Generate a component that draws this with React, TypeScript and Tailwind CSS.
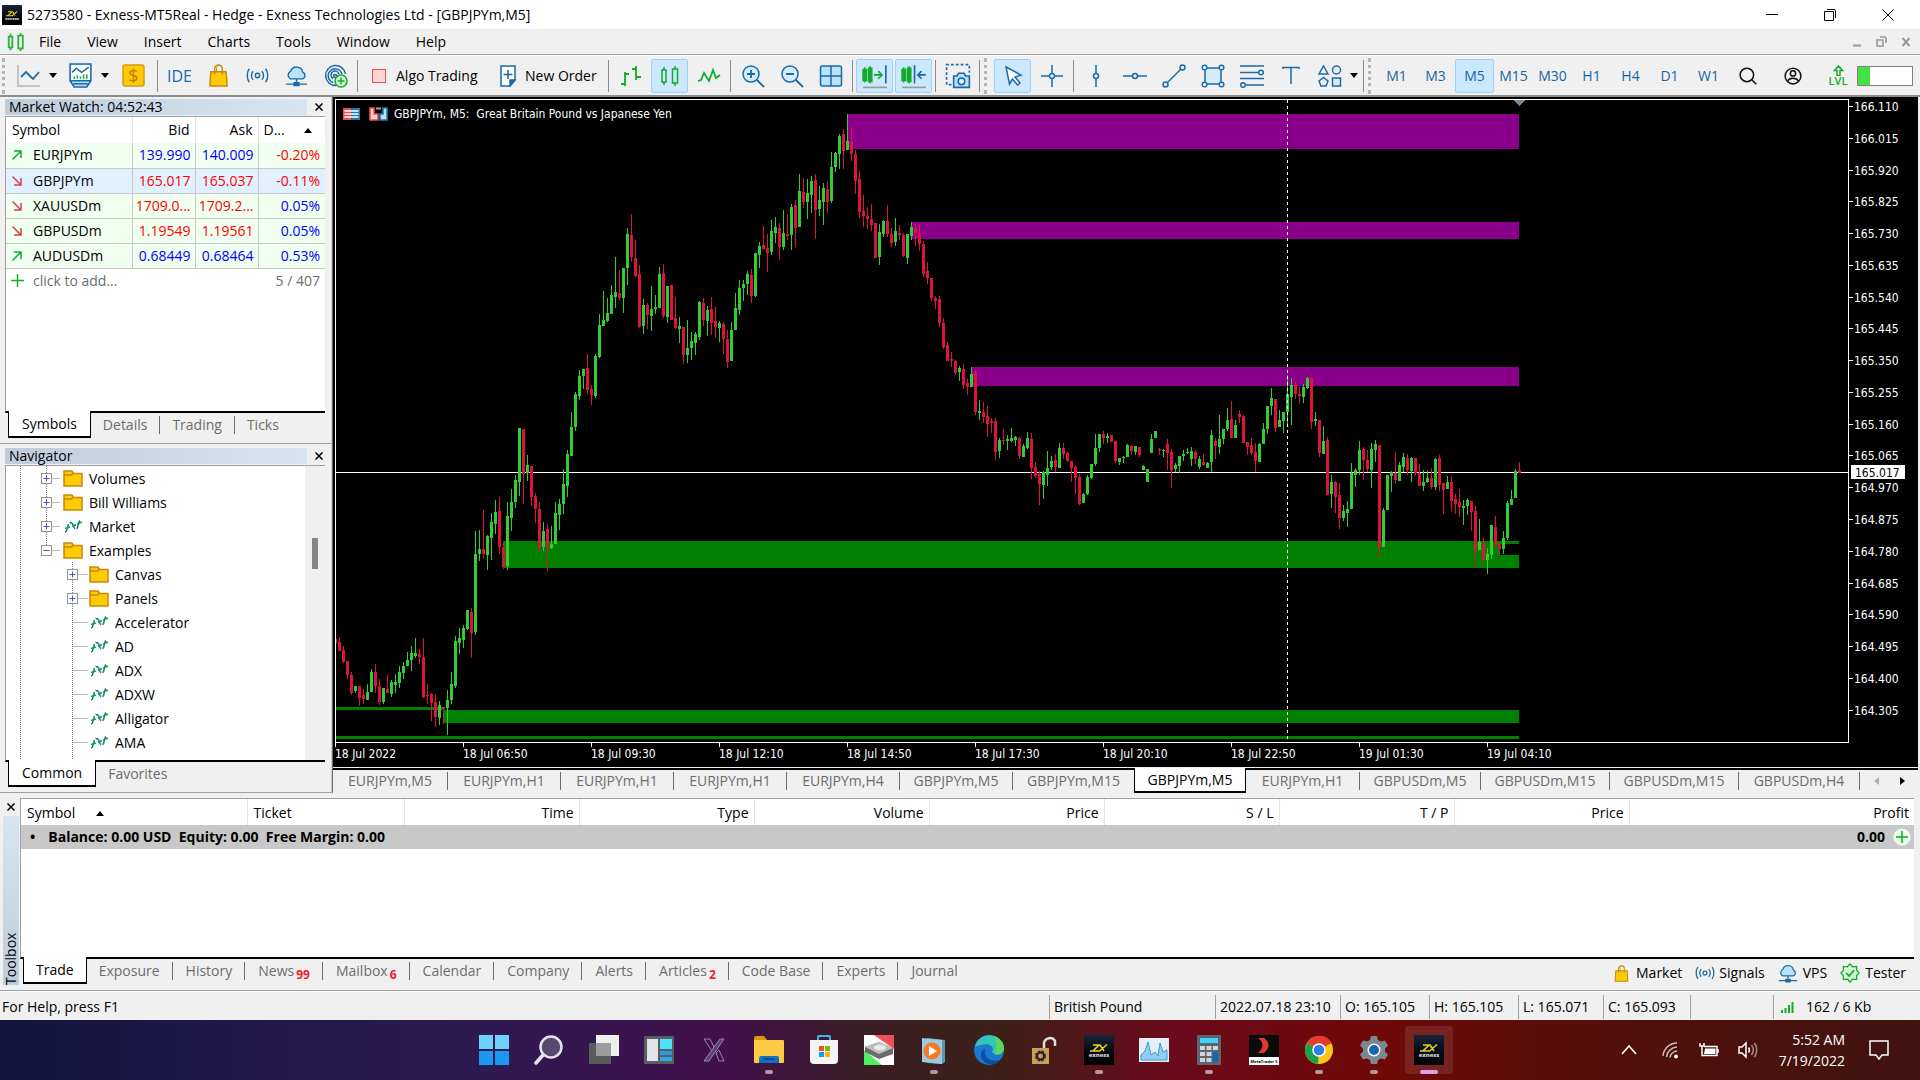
import type { ReactNode } from "react";

type Candle = [string, number, number, number, number];

// side (g = up, r = down), high, body top, body bottom, low.
// Values are scale units below the top edge of the plot.
const candles: Candle[] = [
  ["r", 1240, 1243, 1253, 1253], ["r", 1238, 1250, 1271, 1271], ["r", 1259, 1268, 1295, 1297], ["r", 1294, 1294, 1326, 1334],
  ["r", 1319, 1326, 1367, 1371], ["g", 1351, 1351, 1363, 1367], ["r", 1351, 1351, 1378, 1397], ["r", 1358, 1372, 1382, 1393],
  ["g", 1347, 1365, 1384, 1384], ["g", 1312, 1319, 1365, 1365], ["r", 1301, 1319, 1351, 1367], ["r", 1335, 1351, 1388, 1395],
  ["g", 1356, 1356, 1388, 1393], ["r", 1326, 1357, 1367, 1367], ["g", 1337, 1342, 1370, 1376], ["g", 1324, 1343, 1349, 1367],
  ["g", 1305, 1319, 1344, 1355], ["g", 1296, 1304, 1321, 1335], ["g", 1273, 1291, 1305, 1305], ["g", 1259, 1275, 1291, 1317],
  ["g", 1241, 1275, 1281, 1286], ["r", 1266, 1277, 1284, 1301], ["r", 1241, 1284, 1377, 1379], ["r", 1347, 1371, 1374, 1393],
  ["r", 1367, 1370, 1390, 1432], ["r", 1370, 1389, 1423, 1446], ["g", 1386, 1395, 1425, 1441], ["r", 1400, 1400, 1404, 1439],
  ["g", 1360, 1384, 1402, 1464], ["g", 1319, 1347, 1384, 1393], ["g", 1236, 1247, 1351, 1356], ["g", 1218, 1241, 1252, 1277],
  ["g", 1211, 1218, 1245, 1263], ["g", 1176, 1176, 1220, 1223], ["r", 1171, 1181, 1229, 1286], ["g", 994, 1047, 1227, 1234],
  ["g", 992, 1035, 1046, 1063], ["r", 945, 1035, 1047, 1056], ["g", 1003, 1006, 1049, 1084], ["g", 952, 973, 1010, 1061],
  ["g", 922, 950, 978, 1001], ["r", 915, 948, 1031, 1046], ["r", 1018, 1030, 1077, 1081], ["g", 927, 959, 1075, 1084],
  ["g", 897, 927, 964, 994], ["g", 865, 876, 927, 941], ["g", 756, 756, 881, 913], ["r", 759, 759, 862, 932],
  ["g", 819, 842, 860, 879], ["r", 844, 844, 915, 936], ["r", 906, 913, 943, 975], ["r", 927, 943, 1033, 1045],
  ["g", 973, 994, 1031, 1040], ["r", 978, 989, 1031, 1086], ["g", 982, 1024, 1033, 1035], ["g", 927, 952, 1024, 1024],
  ["g", 920, 932, 957, 992], ["g", 851, 885, 932, 955], ["g", 807, 816, 890, 915], ["g", 719, 754, 821, 821],
  ["g", 674, 678, 754, 763], ["g", 623, 636, 683, 692], ["g", 620, 620, 636, 666], ["r", 586, 618, 669, 681],
  ["r", 657, 666, 680, 703], ["g", 586, 590, 683, 687], ["g", 493, 519, 593, 595], ["g", 440, 507, 521, 521],
  ["g", 457, 491, 510, 512], ["g", 427, 450, 493, 493], ["g", 362, 443, 454, 479], ["r", 393, 445, 457, 463],
  ["g", 387, 387, 457, 491], ["g", 295, 309, 387, 427], ["r", 263, 311, 362, 374], ["r", 323, 364, 406, 408],
  ["r", 380, 401, 523, 526], ["g", 459, 473, 521, 540], ["r", 468, 473, 496, 528], ["g", 429, 482, 498, 533],
  ["g", 450, 477, 482, 493], ["g", 385, 401, 480, 480], ["r", 378, 399, 498, 503], ["g", 429, 429, 500, 514],
  ["r", 427, 427, 507, 507], ["r", 454, 503, 526, 528], ["g", 500, 521, 528, 560], ["r", 523, 523, 588, 609],
  ["g", 507, 572, 588, 606], ["g", 535, 556, 572, 600], ["g", 535, 540, 560, 588], ["g", 463, 466, 546, 553],
  ["r", 457, 468, 507, 521], ["g", 475, 484, 510, 544], ["r", 454, 482, 514, 542], ["r", 477, 510, 523, 549],
  ["g", 510, 514, 526, 558], ["r", 512, 517, 551, 586], ["r", 530, 551, 604, 618], ["g", 512, 530, 602, 602],
  ["g", 445, 480, 530, 530], ["g", 415, 434, 484, 496], ["g", 415, 424, 434, 463], ["g", 395, 401, 424, 450],
  ["r", 390, 404, 452, 468], ["g", 353, 353, 452, 454], ["g", 327, 337, 357, 387], ["r", 291, 334, 344, 346],
  ["r", 309, 341, 353, 397], ["g", 277, 302, 350, 357], ["g", 270, 293, 307, 330], ["r", 284, 295, 339, 369],
  ["g", 254, 307, 339, 346], ["r", 263, 309, 314, 323], ["g", 240, 247, 311, 346], ["r", 231, 242, 295, 339],
  ["g", 171, 210, 293, 293], ["r", 181, 212, 235, 249], ["g", 183, 214, 235, 274], ["g", 176, 187, 219, 261],
  ["r", 171, 184, 254, 321], ["g", 198, 231, 251, 267], ["g", 192, 203, 235, 288], ["r", 187, 205, 235, 261],
  ["g", 120, 154, 233, 238], ["g", 120, 123, 154, 167], ["g", 79, 83, 125, 160], ["r", 67, 79, 118, 160],
  ["g", 33, 95, 115, 115], ["r", 62, 97, 125, 141], ["r", 115, 125, 187, 217], ["r", 164, 182, 258, 272],
  ["r", 219, 256, 267, 293], ["r", 247, 267, 274, 297], ["r", 240, 274, 288, 302], ["r", 284, 284, 364, 364],
  ["g", 286, 304, 362, 380], ["g", 277, 279, 309, 316], ["r", 242, 279, 309, 316], ["r", 295, 309, 330, 339],
  ["g", 272, 302, 327, 337], ["r", 288, 307, 311, 323], ["r", 307, 311, 360, 362], ["g", 309, 309, 364, 378],
  ["g", 281, 293, 314, 323], ["r", 286, 295, 307, 337], ["r", 288, 307, 332, 348], ["r", 325, 332, 401, 408],
  ["r", 374, 394, 410, 424], ["r", 410, 410, 457, 463], ["r", 452, 457, 463, 482], ["r", 452, 459, 514, 523],
  ["r", 503, 514, 570, 574], ["r", 558, 565, 602, 602], ["r", 581, 597, 602, 616], ["r", 600, 602, 630, 634],
  ["g", 613, 618, 627, 648], ["r", 609, 620, 657, 666], ["r", 643, 653, 662, 680], ["g", 616, 632, 662, 662],
  ["r", 625, 627, 719, 726], ["g", 692, 718, 721, 738], ["r", 696, 719, 730, 745], ["r", 706, 729, 747, 777],
  ["r", 733, 741, 745, 768], ["r", 733, 740, 812, 830], ["g", 779, 784, 809, 826], ["r", 759, 783, 786, 796],
  ["g", 772, 782, 786, 807], ["g", 756, 779, 786, 789], ["g", 775, 777, 784, 798], ["r", 777, 779, 821, 828],
  ["g", 793, 798, 823, 823], ["g", 766, 779, 802, 805], ["r", 768, 782, 849, 874], ["r", 835, 846, 867, 872],
  ["r", 856, 862, 885, 934], ["g", 855, 858, 888, 920], ["g", 809, 849, 865, 890], ["g", 821, 832, 846, 853],
  ["r", 816, 830, 846, 858], ["g", 791, 802, 849, 849], ["r", 791, 802, 816, 828], ["r", 812, 815, 832, 835],
  ["r", 832, 832, 849, 881], ["r", 842, 846, 872, 909], ["r", 862, 869, 932, 934], ["g", 906, 909, 929, 929],
  ["g", 865, 869, 909, 911], ["g", 839, 839, 872, 874], ["g", 770, 802, 839, 844], ["g", 770, 770, 802, 812],
  ["r", 763, 770, 779, 793], ["g", 768, 775, 779, 791], ["r", 772, 772, 789, 789], ["r", 786, 786, 832, 837],
  ["g", 826, 826, 835, 842], ["g", 821, 823, 826, 837], ["g", 793, 796, 823, 823], ["r", 796, 798, 809, 819],
  ["g", 798, 798, 812, 819], ["r", 800, 800, 819, 823], ["g", 842, 844, 853, 853], ["g", 851, 851, 881, 881],
  ["g", 770, 782, 814, 814], ["g", 763, 763, 779, 779], ["r", 802, 805, 807, 819], ["g", 805, 806, 808, 823],
  ["r", 782, 793, 814, 853], ["r", 805, 812, 853, 895], ["g", 837, 842, 851, 858], ["g", 821, 821, 844, 860],
  ["g", 807, 816, 821, 833], ["g", 802, 811, 813, 816], ["g", 800, 809, 828, 844], ["r", 807, 812, 828, 839],
  ["g", 821, 828, 846, 851], ["r", 816, 835, 842, 844], ["g", 835, 837, 849, 849], ["g", 761, 772, 835, 858],
  ["r", 779, 786, 798, 828], ["g", 726, 782, 800, 816], ["g", 759, 759, 782, 793], ["g", 710, 738, 759, 763],
  ["r", 694, 736, 779, 779], ["g", 738, 749, 779, 779], ["r", 715, 724, 731, 745], ["r", 726, 729, 791, 791],
  ["r", 789, 789, 800, 819], ["r", 779, 796, 814, 819], ["r", 791, 812, 832, 858], ["g", 791, 793, 835, 835],
  ["g", 745, 759, 793, 793], ["g", 706, 706, 759, 770], ["g", 664, 687, 706, 726], ["r", 689, 689, 756, 766],
  ["g", 715, 738, 754, 754], ["g", 719, 719, 740, 768], ["g", 634, 678, 719, 754], ["g", 641, 657, 685, 749],
  ["r", 650, 657, 678, 689], ["r", 662, 678, 683, 701], ["g", 655, 662, 685, 699], ["g", 639, 641, 664, 666],
  ["r", 641, 641, 742, 759], ["g", 719, 736, 740, 752], ["r", 738, 738, 814, 823], ["g", 752, 786, 816, 816],
  ["r", 777, 784, 911, 911], ["g", 865, 881, 909, 941], ["r", 879, 881, 915, 952], ["r", 883, 911, 964, 989],
  ["g", 934, 948, 964, 971], ["g", 925, 943, 952, 985], ["g", 837, 860, 943, 943], ["g", 849, 853, 865, 892],
  ["g", 786, 807, 853, 865], ["r", 800, 805, 830, 876], ["r", 807, 830, 851, 858], ["g", 791, 805, 853, 895],
  ["g", 784, 793, 807, 835], ["r", 796, 796, 1033, 1056], ["g", 941, 945, 1031, 1031], ["g", 865, 865, 945, 945],
  ["g", 856, 858, 867, 904], ["r", 812, 860, 876, 886], ["g", 835, 842, 879, 879], ["g", 814, 823, 846, 858],
  ["r", 816, 826, 853, 865], ["g", 823, 826, 856, 881], ["r", 826, 826, 860, 867], ["r", 839, 860, 890, 890],
  ["g", 853, 881, 890, 902], ["g", 856, 872, 881, 883], ["r", 849, 872, 892, 897], ["g", 826, 828, 892, 899],
  ["r", 819, 826, 888, 902], ["r", 883, 883, 899, 955], ["g", 867, 881, 897, 897], ["r", 867, 881, 925, 948],
  ["r", 909, 920, 932, 955], ["r", 897, 927, 939, 962], ["g", 922, 936, 941, 980], ["g", 918, 922, 936, 957],
  ["r", 925, 925, 950, 994], ["r", 936, 948, 1040, 1077], ["g", 966, 1019, 1038, 1038], ["r", 1010, 1022, 1061, 1068],
  ["g", 1033, 1047, 1061, 1093], ["g", 980, 980, 1049, 1058], ["r", 959, 985, 1026, 1031], ["r", 1022, 1024, 1035, 1052],
  ["g", 994, 1010, 1035, 1047], ["g", 925, 929, 1010, 1015], ["g", 899, 920, 934, 934], ["g", 851, 856, 918, 918],
  ["r", 835, 853, 860, 860],
];

const UNIT = 0.4337;
const STEP = 4;
const PRICE_Y = 372;

// x, y, width, height, colour
const zones: [number, number, number, number, string][] = [
  [512, 14, 671, 35, "#8b008b"],
  [575, 122, 608, 17, "#8b008b"],
  [635, 267, 548, 19, "#8b008b"],
  [167, 441, 996, 27, "#008000"],
  [1163, 441, 20, 3, "#008000"],
  [1163, 455, 20, 13, "#008000"],
  [0, 607, 108, 3, "#008000"],
  [108, 610, 1075, 13, "#008000"],
  [0, 636, 1183, 3, "#008000"],
];

const prices = [
  "166.110", "166.015", "165.920", "165.825", "165.730", "165.635", "165.540", "165.445", "165.350", "165.255",
  "165.160", "165.065", "164.970", "164.875", "164.780", "164.685", "164.590", "164.495", "164.400", "164.305",
];

const times = [
  "18 Jul 2022", "18 Jul 06:50", "18 Jul 09:30", "18 Jul 12:10", "18 Jul 14:50",
  "18 Jul 17:30", "18 Jul 20:10", "18 Jul 22:50", "19 Jul 01:30", "19 Jul 04:10",
];

const quotes = [
  { up: true, symbol: "EURJPYm", bid: "139.990", ask: "140.009", change: "-0.20%", blue: true, neg: true },
  { up: false, symbol: "GBPJPYm", bid: "165.017", ask: "165.037", change: "-0.11%", blue: false, neg: true, selected: true },
  { up: false, symbol: "XAUUSDm", bid: "1709.0...", ask: "1709.2...", change: "0.05%", blue: false, neg: false },
  { up: false, symbol: "GBPUSDm", bid: "1.19549", ask: "1.19561", change: "0.05%", blue: false, neg: false },
  { up: true, symbol: "AUDUSDm", bid: "0.68449", ask: "0.68464", change: "0.53%", blue: true, neg: false },
];

const tree = [
  { label: "Volumes", depth: 1, box: "+", folder: true },
  { label: "Bill Williams", depth: 1, box: "+", folder: true },
  { label: "Market", depth: 1, box: "+", folder: false },
  { label: "Examples", depth: 1, box: "-", folder: true },
  { label: "Canvas", depth: 2, box: "+", folder: true },
  { label: "Panels", depth: 2, box: "+", folder: true },
  { label: "Accelerator", depth: 2, box: "", folder: false },
  { label: "AD", depth: 2, box: "", folder: false },
  { label: "ADX", depth: 2, box: "", folder: false },
  { label: "ADXW", depth: 2, box: "", folder: false },
  { label: "Alligator", depth: 2, box: "", folder: false },
  { label: "AMA", depth: 2, box: "", folder: false },
  { label: "", depth: 2, box: "", folder: false },
];

const chartTabs = [
  { label: "EURJPYm,M5", w: "w-[115px]" },
  { label: "EURJPYm,H1", w: "w-[113px]" },
  { label: "EURJPYm,H1", w: "w-[113px]" },
  { label: "EURJPYm,H1", w: "w-[113px]" },
  { label: "EURJPYm,H4", w: "w-[113px]" },
  { label: "GBPJPYm,M5", w: "w-[113px]" },
  { label: "GBPJPYm,M15", w: "w-[121px]", last: true },
  { label: "GBPJPYm,M5", w: "w-[112px]", active: true },
  { label: "EURJPYm,H1", w: "w-[114px]" },
  { label: "GBPUSDm,M5", w: "w-[121px]" },
  { label: "GBPUSDm,M15", w: "w-[129px]" },
  { label: "GBPUSDm,M15", w: "w-[129px]" },
  { label: "GBPUSDm,H4", w: "w-[121px]" },
];

const toolboxTabs = [
  { label: "Exposure" }, { label: "History" }, { label: "News", count: 99 }, { label: "Mailbox", count: 6 },
  { label: "Calendar" }, { label: "Company" }, { label: "Alerts" }, { label: "Articles", count: 2 },
  { label: "Code Base" }, { label: "Experts" }, { label: "Journal" },
];

const BLUE = "#1a6aa8";
const GREEN = "#12ac2c";

function Ico({ size = 24, h, box = "0 0 24 24", children }: { size?: number; h?: number; box?: string; children: ReactNode }) {
  return (
    <svg width={size} height={h ?? size} viewBox={box} fill="none" strokeWidth="1.5" className="shrink-0">
      {children}
    </svg>
  );
}

function Sep() {
  return <span className="mx-[2px] h-8 w-px shrink-0 bg-[#8a8a8a]" />;
}

function Grip() {
  return <span className="ml-[2px] mr-[6px] h-9 shrink-0 border-l-3 border-dotted border-[#b4b4b4]" />;
}

function Caret() {
  return <Ico size={8} h={5} box="0 0 8 5"><path d="M0 0h8L4 5z" fill="#000" /></Ico>;
}

function Tool({ label, active, children }: { label: string; active?: boolean; children: ReactNode }) {
  return (
    <button aria-label={label} className="flex h-[36px] w-[39px] shrink-0 items-center justify-center">
      <span className={active ? "flex h-[34px] w-[37px] items-center justify-center rounded-xs border border-[#99d1ff] bg-[#cce8ff]" : "flex"}>
        {children}
      </span>
    </button>
  );
}

function Bag({ size = 24 }: { size?: number }) {
  return (
    <Ico size={size}>
      <path d="M4 8h16l1 15H3z" fill="#fccb05" stroke="#c8890a" />
      <path d="M8 11V5a4 4 0 0 1 8 0v6" stroke="#c8890a" />
      <path d="M10 8V3.500a2 2 0 0 1 3-1.500" stroke="#c8890a" strokeWidth="1" />
    </Ico>
  );
}

function Signal({ size = 24 }: { size?: number }) {
  return (
    <Ico size={size}>
      <g stroke={BLUE}>
        <circle cx="12" cy="12" r="2.300" />
        <path d="M7.500 7.500a6.500 6.500 0 0 0 0 9M16.500 7.500a6.500 6.500 0 0 1 0 9M3.500 5a10 10 0 0 0-2 7 10 10 0 0 0 2 7M20.500 5a10 10 0 0 1 2 7 10 10 0 0 1-2 7" />
      </g>
    </Ico>
  );
}

function Cloud({ size = 24 }: { size?: number }) {
  return (
    <Ico size={size}>
      <path d="M5.500 15.500a4.500 4.500 0 0 1 .5-8 6.500 6.500 0 0 1 12.500 1 3.800 3.800 0 0 1 0 7z" fill="#b9e2fb" stroke={BLUE} />
      <path d="M12 15.500V20M1 21h22M9.500 19.500h5v3h-5z" stroke={BLUE} />
    </Ico>
  );
}

function CandlePair({ color }: { color: string }) {
  return (
    <g stroke={color}>
      <path d="M6 3v3M6 18v3M4 6h4v12H4zM17 2v3M17 19v3M14.500 5h5v14h-5z" />
    </g>
  );
}

function Exness({ size = 30 }: { size?: number }) {
  return (
    <svg width={size} height={size} viewBox="0 0 30 30" className="shrink-0">
      <defs>
        <linearGradient id="exBg" x1="0" y1="0" x2="0" y2="1">
          <stop offset="0" stopColor="#17253a" />
          <stop offset="0.600" stopColor="#05080d" />
          <stop offset="1" stopColor="#000" />
        </linearGradient>
      </defs>
      <rect width="30" height="30" fill="url(#exBg)" />
      <path d="M9 10h6l-6 6h6M16 10l4 6M23 9.500l-8 7M6 16h5" stroke="#e6d21f" strokeWidth="1.600" fill="none" />
      <text x="15" y="22" textAnchor="middle" fontSize="6" fontWeight="700" fill="#e8e8e8" fontFamily="Open Sans">exness</text>
    </svg>
  );
}

function TitleBar() {
  return (
    <header className="flex h-[29px] shrink-0 items-center bg-white">
      <div className="flex flex-1 items-center gap-[5px] pl-[2px]">
        <Exness size={20} />
        <h1>5273580 - Exness-MT5Real - Hedge - Exness Technologies Ltd - [GBPJPYm,M5]</h1>
      </div>
      <button aria-label="Minimize" className="flex w-[58px] justify-center">
        <Ico size={12} box="0 0 12 12"><path d="M0 5.500h12" stroke="#000" strokeWidth="1" /></Ico>
      </button>
      <button aria-label="Restore" className="flex w-[58px] justify-center">
        <Ico size={12} box="0 0 12 12">
          <path d="M.5 2.500h9v9h-9zM3 .5h7a1.500 1.500 0 0 1 1.500 1.500v7" stroke="#000" strokeWidth="1" />
        </Ico>
      </button>
      <button aria-label="Close" className="mr-[3px] flex w-[58px] justify-center">
        <Ico size={12} box="0 0 12 12"><path d="M.5.5l11 11M11.500.5l-11 11" stroke="#000" strokeWidth="1" /></Ico>
      </button>
    </header>
  );
}

function MenuBar() {
  return (
    <nav className="flex h-[26px] shrink-0 items-center border-b border-[#a0a0a0] pl-[6px]">
      <Ico size={20} box="2 1 20 22"><g strokeWidth="2"><CandlePair color="#2cb53c" /></g></Ico>
      <div className="flex flex-1">
        {["File", "View", "Insert", "Charts", "Tools", "Window", "Help"].map((m) => (
          <button key={m} className="px-[13px]">{m}</button>
        ))}
      </div>
      <div className="flex items-center gap-[14px] pr-[9px]">
        <button aria-label="Minimize chart"><Ico size={10} box="0 0 10 10"><path d="M1 8.500h8" stroke="#999" strokeWidth="2" /></Ico></button>
        <button aria-label="Restore chart">
          <Ico size={11} box="0 0 11 11"><path d="M1 4h6v6H1zM4 1h4.500A1.500 1.500 0 0 1 10 2.500V7" stroke="#999" strokeWidth="1.600" /></Ico>
        </button>
        <button aria-label="Close chart"><Ico size={10} box="0 0 10 10"><path d="M1.500 1l7 8M8.500 1l-7 8" stroke="#999" strokeWidth="2" /></Ico></button>
      </div>
    </nav>
  );
}

function Toolbar() {
  return (
    <div className="flex h-[42px] shrink-0 items-center border-b-2 border-[#8c8c8c] border-t border-t-white">
      <Grip />
      <button aria-label="Line chart" className="flex w-[49px] shrink-0 items-center justify-between pl-[6px] pr-[3px]">
        <Ico><path d="M1 1v21h22" stroke="#b4b4b4" /><path d="M4 13l5-5 7 7 6-7" stroke={BLUE} strokeWidth="1.800" /></Ico>
        <Caret />
      </button>
      <button aria-label="Indicators" className="flex w-[52px] shrink-0 items-center justify-between pl-[8px] pr-[3px]">
        <Ico size={25}>
          <path d="M2 1h20v16l-4 6H6l-4-6zM2 17h20" stroke={BLUE} fill="#b9e2fb" />
          <path d="M3 2h18v14H3z" fill="#fff" />
          <path d="M4 9l4-4 5 4 7-5" stroke={BLUE} />
          <path d="M6 15v-2M9 15v-3M12 15v-2M15 15v-4M18 15v-4" stroke={GREEN} />
          <path d="M5 20h14" stroke={BLUE} />
        </Ico>
        <Caret />
      </button>
      <button aria-label="Deposit" className="flex w-[43px] shrink-0 justify-center">
        <svg width="23" height="23" viewBox="0 0 23 23">
          <rect x="1" y="1" width="21" height="21" rx="2" fill="#fccb05" stroke="#d39a18" strokeWidth="1.500" />
          <text x="11.500" y="18" textAnchor="middle" fontSize="18" fill="#c07a00" fontFamily="Open Sans">$</text>
        </svg>
      </button>
      <Sep />
      <button className="w-[39px] shrink-0 text-base text-[#1a6aa8]">IDE</button>
      <Tool label="Market"><Bag size={23} /></Tool>
      <Tool label="Signals"><Signal size={23} /></Tool>
      <Tool label="VPS"><Cloud size={23} /></Tool>
      <Tool label="Copy signal">
        <Ico>
          <g stroke={BLUE}>
            <path d="M12 21.500A10 10 0 1 1 21.500 10M9 18.500A7 7 0 1 1 18 10M9 14.500a4 4 0 1 1 6-4" />
            <circle cx="11" cy="12" r="1.500" />
          </g>
          <circle cx="17" cy="17" r="6" fill="#d7f5d7" stroke={GREEN} />
          <path d="M17 13.500v7M13.500 17h7" stroke={GREEN} />
        </Ico>
      </Tool>
      <Sep />
      <button className="flex w-[131px] shrink-0 items-center gap-[10px] pl-[12px]">
        <span className="size-[14px] border border-[#d9534f] bg-[#ffd5cf]" />Algo Trading
      </button>
      <button className="flex w-[115px] shrink-0 items-center gap-[8px] pl-[8px]">
        <Ico size={18} h={22} box="0 0 18 22">
          <path d="M2 1h14v14l-5 6H2z" fill="#fff" stroke={BLUE} /><path d="M16 15h-5v6z" fill={BLUE} stroke={BLUE} />
          <path d="M9 5v9M4.500 9.500h9" stroke={BLUE} />
        </Ico>
        New Order
      </button>
      <Sep />
      <Tool label="Bar chart"><Ico><path d="M6 8v14M6 10h4M2 20h4M17 2v14M13 5h4M17 13h5" stroke={GREEN} strokeWidth="1.800" /></Ico></Tool>
      <Tool label="Candlesticks" active><Ico><CandlePair color={GREEN} /></Ico></Tool>
      <Tool label="Line"><Ico><path d="M1 17l3-1 3-7 5 8 4-11 3 8 4-3" stroke={GREEN} strokeWidth="1.800" /></Ico></Tool>
      <Sep />
      <Tool label="Zoom in">
        <Ico><circle cx="10" cy="10" r="8" fill="#d5ecfb" stroke={BLUE} /><path d="M16 16l7 7M10 6v8M6 10h8" stroke={BLUE} strokeWidth="1.800" /></Ico>
      </Tool>
      <Tool label="Zoom out">
        <Ico><circle cx="10" cy="10" r="8" fill="#d5ecfb" stroke={BLUE} /><path d="M16 16l7 7M6 10h8" stroke={BLUE} strokeWidth="1.800" /></Ico>
      </Tool>
      <Tool label="Tile windows">
        <Ico><rect x="1.500" y="2" width="21" height="20" rx="2" fill="#b9e2fb" stroke={BLUE} /><path d="M12 2v20M1.500 12h21" stroke={BLUE} /></Ico>
      </Tool>
      <Sep />
      <Tool label="Chart shift" active>
        <Ico size={26}>
          <path d="M2.500 4v14M1 6h3v10H1zM7.500 3v16M6 5h3v12H6zM11 11h7M15 7.500l3.500 3.500L15 14.500" stroke={GREEN} />
          <path d="M22 2v17" stroke={BLUE} /><path d="M1 22.500h22" stroke="#9a9a9a" />
        </Ico>
      </Tool>
      <Tool label="Auto scroll" active>
        <Ico size={26}>
          <path d="M2.500 4v14M1 6h3v10H1zM7.500 3v16M6 5h3v12H6z" stroke={GREEN} />
          <path d="M12.500 2v17M16 11h7M19 7.500L15.500 11l3.500 3.500" stroke={BLUE} /><path d="M1 22.500h22" stroke="#9a9a9a" />
        </Ico>
      </Tool>
      <Sep />
      <Tool label="Screenshot">
        <Ico size={26}>
          <path d="M6 20H1.500V1.500h21V9" stroke={BLUE} strokeDasharray="2.500 2" />
          <path d="M8 12h3l1.500-2.500h5L19 12h3.500v10.500H8z" fill="#b9e2fb" stroke={BLUE} />
          <circle cx="15.200" cy="17" r="3" fill="#fff" stroke={BLUE} />
        </Ico>
      </Tool>
      <Sep />
      <Grip />
      <Tool label="Cursor" active><Ico><path d="M5 3l15 8-6 2 5 6-2.500 2-5-6-3 5z" fill="#fff" stroke={BLUE} /></Ico></Tool>
      <Tool label="Crosshair">
        <Ico><circle cx="12" cy="12" r="2.500" stroke={BLUE} /><path d="M12 1v8.500M12 14.500V23M1 12h8.500M14.500 12H23" stroke={BLUE} /></Ico>
      </Tool>
      <Sep />
      <Tool label="Vertical line"><Ico><circle cx="12" cy="12" r="2.500" stroke={BLUE} /><path d="M12 1v8.500M12 14.500V23" stroke={BLUE} /></Ico></Tool>
      <Tool label="Horizontal line"><Ico><circle cx="12" cy="12" r="2.500" stroke={BLUE} /><path d="M0 12h9.500M14.500 12H24" stroke={BLUE} /></Ico></Tool>
      <Tool label="Trend line">
        <Ico><circle cx="3.500" cy="20.500" r="2.500" stroke={BLUE} /><circle cx="20.500" cy="3.500" r="2.500" stroke={BLUE} /><path d="M5.500 18.500l13-13" stroke={BLUE} /></Ico>
      </Tool>
      <Tool label="Rectangle">
        <Ico>
          <g stroke={BLUE}>
            <path d="M4 4h16v16H4z" fill="#d5ecfb" />
            <circle cx="3.500" cy="3.500" r="2.300" fill="#fff" /><circle cx="20.500" cy="3.500" r="2.300" fill="#fff" />
            <circle cx="3.500" cy="20.500" r="2.300" fill="#fff" /><circle cx="20.500" cy="20.500" r="2.300" fill="#fff" />
          </g>
        </Ico>
      </Tool>
      <Tool label="Fibonacci">
        <Ico><path d="M0 2h24M0 8.500h18M0 14.500h24M6 21h18" stroke={BLUE} /><circle cx="21" cy="8.500" r="2.300" stroke={BLUE} /><circle cx="3" cy="21" r="2.300" stroke={BLUE} /></Ico>
      </Tool>
      <Tool label="Text"><Ico><path d="M4 5V3.500h16V5M12 3.500V20" stroke={BLUE} /></Ico></Tool>
      <button aria-label="Shapes" className="flex w-[51px] shrink-0 items-center gap-[8px] pl-[8px]">
        <Ico><g stroke={BLUE}><path d="M5.500 2l4.500 8H1z" /><circle cx="18.500" cy="6" r="4" /><path d="M5.500 13.500L10 17l-2 5H3l-2-5z" /><path d="M14.500 14h8v8h-8z" fill="#d5ecfb" /></g></Ico>
        <Caret />
      </button>
      <Sep />
      <Grip />
      {["M1", "M3", "M5", "M15", "M30", "H1", "H4", "D1", "W1"].map((t) => (
        <button
          key={t}
          className={`h-[34px] w-[39px] shrink-0 text-[#1565a5] ${t === "M5" ? "rounded-xs border border-[#99d1ff] bg-[#cce8ff]" : ""}`}
        >
          {t}
        </button>
      ))}
      <div className="ml-auto flex items-center pr-[7px]">
        <button aria-label="Search" className="flex w-[38px] justify-center">
          <Ico size={18}><circle cx="10.500" cy="10.500" r="9" stroke="#111" strokeWidth="2" /><path d="M17 17l6 6" stroke="#111" strokeWidth="2.200" /></Ico>
        </button>
        <button aria-label="Account" className="flex w-[52px] justify-center">
          <Ico size={18}><circle cx="12" cy="12" r="10.500" stroke="#111" strokeWidth="2" /><circle cx="12" cy="8.500" r="3.500" stroke="#111" strokeWidth="2" /><path d="M4.500 19c3-5.500 12-5.500 15 0" stroke="#111" strokeWidth="2" /></Ico>
        </button>
        <button className="flex w-[38px] flex-col items-center text-[11px] font-semibold leading-[10px] text-[#12ac2c]">
          <Ico size={11} box="0 0 11 11"><path d="M5.500 1l4 4.500h-2.500v5h-3v-5H1.500z" stroke={GREEN} /></Ico>
          LVL
        </button>
        <span className="flex h-[20px] w-[56px] border border-[#808080] bg-white"><span className="w-[12px] bg-[#44e044]" /></span>
      </div>
    </div>
  );
}

function PanelTitle({ children }: { children: ReactNode }) {
  return (
    <div className="-mr-[6px] flex h-[16px] items-center">
      <h2 className="h-[16px] flex-1 bg-linear-to-r from-[#bfcddb] to-[#d7e4f2] pl-[4px] leading-[16px]">{children}</h2>
      <button aria-label="Close panel" className="flex w-[24px] justify-center">
        <Ico size={8} box="0 0 8 8"><path d="M.5.5l7 7M7.500.5l-7 7" stroke="#000" /></Ico>
      </button>
    </div>
  );
}

function TabSep() {
  return <span className="h-[18px] w-px shrink-0 bg-[#6d6d6d]" />;
}

function PanelTabs({ tabs }: { tabs: string[] }) {
  const [active, ...rest] = tabs;
  return (
    <div className="flex h-[25px] items-start pl-[3px] text-[#6d6d6d]">
      <button className="-mt-[2px] h-[27px] border-x border-b-2 border-black bg-white px-[13px] text-black">{active}</button>
      {rest.map((t, i) => (
        <div key={t} className="flex h-[23px] items-center">
          {i > 0 && <TabSep />}
          <button className="px-[12px]">{t}</button>
        </div>
      ))}
    </div>
  );
}

function MarketWatch() {
  return (
    <section className="h-[347px] shrink-0 border-b border-[#a0a0a0] pl-[5px] pr-[6px] pt-[2px]">
      <PanelTitle>Market Watch: 04:52:43</PanelTitle>
      <div className="mt-px h-[297px] border-b-2 border-b-black border-l border-t border-l-[#a0a0a0] border-t-[#a0a0a0] bg-white">
        <table className="w-full table-fixed border-collapse">
          <colgroup>
            <col className="w-[126px]" /><col className="w-[63px]" /><col className="w-[63px]" /><col />
          </colgroup>
          <thead>
            <tr className="h-[26px]">
              <th className="border-r border-[#e3e3e3] pl-[6px] text-left font-normal">Symbol</th>
              <th className="border-r border-[#e3e3e3] pr-[5px] text-right font-normal">Bid</th>
              <th className="border-r border-[#e3e3e3] pr-[5px] text-right font-normal">Ask</th>
              <th className="pl-[5px] font-normal">
                <div className="flex items-center gap-[19px]">D...<Ico size={8} h={5} box="0 0 8 5"><path d="M0 5h8L4 0z" fill="#000" /></Ico></div>
              </th>
            </tr>
          </thead>
          <tbody>
            {quotes.map((q) => (
              <tr key={q.symbol} className={`h-[25px] border-b border-[#c8c8c8] ${q.selected ? "bg-[#e0f0ff]" : "bg-[#f0fff0]"}`}>
                <td className="border-r border-[#c8c8c8] pl-[6px]">
                  <div className="flex items-center gap-[11px]">
                    <Ico size={10} box="0 0 10 10">
                      {q.up ? <path d="M.5 9.500L9 1M2 1h7v7" stroke={GREEN} /> : <path d="M.5.5L9 9M2 9h7V2" stroke="#d8404a" />}
                    </Ico>
                    {q.symbol}
                  </div>
                </td>
                <td className={`border-r border-[#c8c8c8] pr-[4px] text-right ${q.blue ? "text-[#0000ff]" : "text-[#ff0000]"}`}>{q.bid}</td>
                <td className={`border-r border-[#c8c8c8] pr-[4px] text-right ${q.blue ? "text-[#0000ff]" : "text-[#ff0000]"}`}>{q.ask}</td>
                <td className={`pr-[5px] text-right ${q.neg ? "text-[#ff0000]" : "text-[#0000ff]"}`}>{q.change}</td>
              </tr>
            ))}
            <tr className="h-[25px] text-[#6d6d6d]">
              <td colSpan={2} className="pl-[5px]">
                <div className="flex items-center gap-[9px]">
                  <Ico size={13} box="0 0 13 13"><path d="M6.500 0v13M0 6.500h13" stroke={GREEN} /></Ico>click to add...
                </div>
              </td>
              <td colSpan={2} className="pr-[5px] text-right">5 / 407</td>
            </tr>
          </tbody>
        </table>
      </div>
      <PanelTabs tabs={["Symbols", "Details", "Trading", "Ticks"]} />
    </section>
  );
}

function Branch({ depth, box }: { depth: number; box: string }) {
  const x = depth === 1 ? 40.5 : 66.5;
  const dots = { stroke: "#808080", strokeWidth: 1, strokeDasharray: "1 1" };
  return (
    <svg width={depth === 1 ? 57 : 83} height="24" className="shrink-0">
      <path d="M14.500 0v24" {...dots} />
      {depth === 1 && <path d={box === "-" ? "M40.500 0v12" : "M40.500 0v24"} {...dots} />}
      {depth === 2 && <path d="M66.500 0v24" {...dots} />}
      <path d={`M${x} 12.500h${depth === 1 ? 14 : 15}`} {...dots} />
      {box && (
        <>
          <rect x={x - 5} y="7.500" width="10" height="10" fill="#fff" stroke="#919191" />
          <path d={box === "+" ? `M${x - 3} 12.500h6M${x} 9.500v6` : `M${x - 3} 12.500h6`} stroke="#3c5ca8" />
        </>
      )}
    </svg>
  );
}

function Navigator() {
  return (
    <section className="flex min-h-0 flex-1 flex-col border-b border-[#a0a0a0] pb-[5px] pl-[5px] pr-[6px] pt-[4px]">
      <PanelTitle>Navigator</PanelTitle>
      <div className="mt-px flex min-h-0 flex-1 border-b-2 border-b-black border-l border-t border-l-[#a0a0a0] border-t-[#a0a0a0] bg-white">
        <ul className="min-w-0 flex-1 overflow-hidden">
          {tree.map((n, i) => (
            <li key={i} className="flex h-6 items-center">
              <Branch depth={n.depth} box={n.box} />
              {n.folder ? (
                <Ico size={20} h={17} box="0 0 20 17">
                  <path d="M1 1h8l1.500 2.500H19V16H1z" fill="#fccb05" stroke="#c8890a" />
                  <path d="M1 5h7.500L10 3" stroke="#c8890a" />
                </Ico>
              ) : (
                <Ico size={20} h={17} box="0 0 20 17">
                  <path d="M2 14C5 14 4 4.500 7.500 4.500S10 11 13 11s1.500-8 5-9.500" stroke={BLUE} strokeDasharray="9 1.500" />
                  <path d="M2 10.500L7 9M9 8.500l4-2M14 6l5-2" stroke={GREEN} strokeWidth="1.800" />
                </Ico>
              )}
              <span className="pl-[6px] pt-px">{n.label}</span>
            </li>
          ))}
        </ul>
        <div className="w-[20px] bg-[#f0f0f0] pl-[7px] pt-[72px]"><div className="h-[31px] w-[6px] bg-[#858585]" /></div>
      </div>
      <PanelTabs tabs={["Common", "Favorites"]} />
    </section>
  );
}

function Plot() {
  return (
    <svg width="100%" height="100%" className="block" shapeRendering="crispEdges">
      {zones.map(([x, y, w, h, fill], i) => <rect key={i} x={x} y={y} width={w} height={h} fill={fill} />)}
      <rect x="0" y={PRICE_Y} width="100%" height="1" fill="#fff" />
      {candles.map(([side, ...levels], i) => {
        const [high, top, bottom, low] = levels.map((v) => Math.round(v * UNIT));
        const x = i * STEP - 1;
        const fill = side === "g" ? "#32cd32" : "#dc143c";
        return (
          <g key={i} fill={fill}>
            <rect x={x} y={high} width="1" height={Math.max(low - high, 1)} />
            <rect x={x - 1} y={top} width="3" height={Math.max(bottom - top, 1)} />
          </g>
        );
      })}
      <path d="M951.500 0v642" stroke="#fff" strokeDasharray="3 3" />
      <path d="M1178 0h11l-5.500 6z" fill="#778899" />
    </svg>
  );
}

function Chart() {
  return (
    <main className="flex min-h-0 flex-1 border-l border-[#6d6d6d] bg-black pl-[2px] pt-[2px] font-['DejaVu_Sans_Condensed','DejaVu_Sans',sans-serif] text-[12px] text-white">
      <div className="flex min-w-0 flex-1 flex-col">
        <div className="relative min-h-0 flex-1 border border-white">
          <Plot />
          <div className="absolute left-[6px] top-[6px] flex h-[16px] items-center">
            <Ico size={19} h={14} box="0 0 19 14">
              <path d="M1 1h8.500v12H1z" fill="#e8504a" /><path d="M9.500 1H18v12H9.500z" fill="#2478b8" />
              <path d="M2.500 4h14M2.500 7h14M2.500 10h14" stroke="#fff" />
            </Ico>
            <span className="w-[8px]" />
            <Ico size={19} h={14} box="0 0 19 14">
              <path d="M1 1h4v6h4v6H1z" fill="#ffd0ca" stroke="#e8504a" /><path d="M18 1h-4v6h-3v6h7z" fill="#b9e2fb" stroke="#2478b8" />
              <path d="M7 1.500h5" stroke="#aaa" strokeWidth="2" />
            </Ico>
            <span className="whitespace-pre pl-[6px]">GBPJPYm, M5:  Great Britain Pound vs Japanese Yen</span>
          </div>
        </div>
        <svg height="24" className="w-full shrink-0">
          {times.map((t, i) => (
            <g key={t} fill="#fff">
              <rect x={i * 128} y="0" width="1" height="4" />
              <text x={i * 128} y="15" fontSize="12">{t}</text>
            </g>
          ))}
        </svg>
      </div>
      <svg width="69" height="100%" className="shrink-0">
        {prices.map((p, i) => {
          const y = 7 + Math.round(i * 31.77);
          return (
            <g key={p} fill="#fff">
              <rect x="0" y={y} width="4" height="1" />
              <text x="5" y={y + 5} fontSize="12">{p}</text>
            </g>
          );
        })}
        <rect x="2" y="366" width="54" height="14" fill="#fff" />
        <text x="6" y="378" fontSize="12" fill="#000">165.017</text>
      </svg>
    </main>
  );
}

function ChartTabs() {
  return (
    <div className="flex h-[26px] shrink-0 border-l border-[#6d6d6d] pt-px text-[#6d6d6d]">
      <div className="flex min-w-0 flex-1 items-start border-t-2 border-black">
        {chartTabs.map((t, i) =>
          t.active ? (
            <button key={i} className={`-mt-[2px] h-[25px] shrink-0 border-x border-b-2 border-black bg-white text-black ${t.w}`}>{t.label}</button>
          ) : (
            <button key={i} className={`flex h-[22px] shrink-0 items-center ${t.w}`}>
              <span className="flex-1">{t.label}</span>
              {!t.last && <TabSep />}
            </button>
          )
        )}
        <div className="flex h-[22px] flex-1 items-center justify-end gap-[21px] pr-[13px]">
          <button aria-label="Previous tabs"><Ico size={5} h={8} box="0 0 5 8"><path d="M5 0v8L0 4z" fill="#b0b0b0" /></Ico></button>
          <button aria-label="Next tabs"><Ico size={5} h={8} box="0 0 5 8"><path d="M0 0v8l5-4z" fill="#000" /></Ico></button>
        </div>
      </div>
    </div>
  );
}

function Toolbox() {
  return (
    <section className="flex h-[198px] shrink-0 border-b border-[#a0a0a0] pr-[6px] pt-[5px]">
      <div className="flex w-[20px] shrink-0 flex-col items-center pl-[2px]">
        <button aria-label="Close toolbox" className="flex h-[18px] items-center">
          <Ico size={8} box="0 0 8 8"><path d="M.5.5l7 7M7.500.5l-7 7" stroke="#000" /></Ico>
        </button>
        <div className="mb-[5px] w-[16px] flex-1 rotate-180 bg-linear-to-b from-[#bfcddb] to-[#d7e4f2] leading-[16px] [writing-mode:vertical-rl]">Toolbox</div>
      </div>
      <div className="flex min-w-0 flex-1 flex-col">
        <div className="flex-1 border-b-2 border-b-black border-l border-t border-l-[#a0a0a0] border-t-[#a0a0a0] bg-white">
          <table className="w-full table-fixed border-collapse">
            <colgroup>
              <col className="w-[226px]" /><col className="w-[157px]" />
              <col className="w-[175px]" /><col className="w-[175px]" /><col className="w-[175px]" /><col className="w-[175px]" />
              <col className="w-[175px]" /><col className="w-[175px]" /><col className="w-[175px]" /><col />
            </colgroup>
            <thead>
              <tr className="h-[26px]">
                <th className="border-r border-[#e3e3e3] pl-[6px] pt-[2px] font-normal">
                  <div className="flex items-center gap-[21px]">Symbol<Ico size={8} h={5} box="0 0 8 5"><path d="M0 5h8L4 0z" fill="#000" /></Ico></div>
                </th>
                <th className="border-r border-[#e3e3e3] pl-[6px] pt-[2px] text-left font-normal">Ticket</th>
                {["Time", "Type", "Volume", "Price", "S / L", "T / P", "Price"].map((h, i) => (
                  <th key={i} className="border-r border-[#e3e3e3] pr-[5px] pt-[2px] text-right font-normal">{h}</th>
                ))}
                <th className="pr-[5px] pt-[2px] text-right font-normal">Profit</th>
              </tr>
            </thead>
            <tbody>
              <tr className="h-[24px] bg-[#c8c8c8] font-bold">
                <td colSpan={9} className="whitespace-pre pl-[9px]">•<span className="pl-[13px]">Balance: 0.00 USD  Equity: 0.00  Free Margin: 0.00</span></td>
                <td className="pr-[3px]">
                  <div className="flex items-center justify-end gap-[8px]">
                    0.00
                    <Ico size={18}><circle cx="12" cy="12" r="11.500" fill="#e9fbe9" /><path d="M12 4v16M4 12h16" stroke={GREEN} strokeWidth="2" /></Ico>
                  </div>
                </td>
              </tr>
            </tbody>
          </table>
        </div>
        <div className="flex h-[31px] pl-[3px] text-[#6d6d6d]">
          <button className="-mt-[2px] h-[27px] border-x border-b-2 border-black bg-white px-[12px] text-black">Trade</button>
          <div className="flex h-[24px] flex-1 items-center">
            {toolboxTabs.map((t, i) => (
              <div key={t.label} className="flex items-center gap-px">
                {i > 0 && <TabSep />}
                <button className="flex items-center gap-[2px] px-[12px]">
                  {t.label}
                  {t.count && <span className="relative top-[4px] text-[12px] font-bold text-[#ee1c25]">{t.count}</span>}
                </button>
              </div>
            ))}
          </div>
          <div className="flex h-[28px] items-center gap-[13px] pr-[8px] text-black">
            <button className="flex items-center gap-[6px]"><Bag size={17} />Market</button>
            <button className="flex items-center gap-[4px]"><Signal size={20} />Signals</button>
            <button className="flex items-center gap-[5px]"><Cloud size={20} />VPS</button>
            <button className="flex items-center gap-[5px]">
              <Ico size={20}>
                <path d="M12 1l3 3.500 5-.5v5l3 3-3 3v5l-5-.5L12 23l-3-3.500-5 .5v-5l-3-3 3-3V4l5 .5z" fill="#d7f5d7" stroke={GREEN} />
                <path d="M7.500 12l3.500 3.500 6-7" stroke={GREEN} strokeWidth="2" />
              </Ico>
              Tester
            </button>
          </div>
        </div>
      </div>
    </section>
  );
}

function StatusBar() {
  const cells = [
    { text: "British Pound", w: "w-[166px]" },
    { text: "2022.07.18 23:10", w: "w-[125px]" },
    { text: "O: 165.105", w: "w-[89px]" },
    { text: "H: 165.105", w: "w-[89px]" },
    { text: "L: 165.071", w: "w-[85px]" },
    { text: "C: 165.093", w: "w-[87px]" },
    { text: "", w: "w-[83px]" },
  ];
  return (
    <footer className="flex h-[29px] shrink-0 items-center border-t border-white pt-[2px]">
      <span className="flex-1 pl-[2px]">For Help, press F1</span>
      {cells.map((c, i) => (
        <span key={i} className={`h-[24px] border-l border-[#a0a0a0] pl-[4px] leading-[24px] ${c.w}`}>{c.text}</span>
      ))}
      <span className="flex h-[24px] w-[147px] items-center gap-[11px] border-l border-[#a0a0a0] pl-[7px]">
        <Ico size={14} h={12} box="0 0 14 12"><path d="M1 12V9M4.500 12V7M8 12V4M11.500 12V1" stroke={GREEN} strokeWidth="2" /></Ico>
        162 / 6 Kb
      </span>
    </footer>
  );
}

const apps: { label: string; open?: boolean; active?: boolean; icon: ReactNode }[] = [
  { label: "Start", icon: (
    <g><path d="M0 0h14v14H0zM16 0h14v14H16z" fill="#6fd0fa" /><path d="M0 16h14v14H0zM16 16h14v14H16z" fill="#1a98f2" /></g>
  ) },
  { label: "Search", icon: (
    <g fill="none" stroke="#e6e2ec"><circle cx="17" cy="12" r="10.500" strokeWidth="2.500" fill="#574a70" /><path d="M9 20l-7 8" strokeWidth="3.500" strokeLinecap="round" /></g>
  ) },
  { label: "Task view", icon: <g><rect x="0" y="8" width="22" height="21" fill="#5c5c5c" /><rect x="7" y="0" width="23" height="21" fill="#efefef" /><rect x="7" y="8" width="15" height="13" fill="#9c9c9c" /></g> },
  { label: "Widgets", icon: (
    <g><rect width="30" height="28" y="1" rx="1" fill="#58605f" /><rect x="3" y="4" width="11" height="22" fill="#e2e2ea" /><rect x="16" y="4" width="12" height="10" fill="#4ee2f8" /><rect x="16" y="16" width="12" height="4" fill="#2b9ee0" /><rect x="16" y="22" width="12" height="4" fill="#2ba8ea" /></g>
  ) },
  { label: "X", icon: (
    <g stroke="#9a86a8" fill="none"><path d="M5 4h6l4 8-2 4zM17 18l3-3 5 11h-5z" strokeWidth="1" /><path d="M21 4h4L10 26H5z" strokeWidth="1" fill="#5a4080" /></g>
  ) },
  { label: "File Explorer", open: true, icon: (
    <g><path d="M0 3q0-2 2-2h8l3 4h15v6H0z" fill="#d9960c" /><rect y="5" width="30" height="23" rx="1" fill="#fdcb43" /><path d="M5 28v-5q0-2 2-2h16q2 0 2 2v5z" fill="#1272c4" /><path d="M9 24h12" stroke="#0a4e91" strokeWidth="2" /></g>
  ) },
  { label: "Store", icon: (
    <g><path d="M9 7V2q0-1 1-1h10q1 0 1 1v5" stroke="#3ab4ee" strokeWidth="2" fill="none" /><path d="M1 5h28v20q0 4-4 4H5q-4 0-4-4z" fill="#f4f4f6" /><path d="M10 11h5v5h-5z" fill="#f25022" /><path d="M16 11h5v5h-5z" fill="#7fba00" /><path d="M10 17h5v5h-5z" fill="#00a4ef" /><path d="M16 17h5v5h-5z" fill="#ffb900" /></g>
  ) },
  { label: "Disk tool", icon: (
    <g><rect width="30" height="30" fill="#fff" /><path d="M10 0h20v14z" fill="#f0505a" /><path d="M0 15l18 15H0z" fill="#4cf05c" /><path d="M1 12l14-5 14 6v6l-14 5-14-7z" fill="#6b6b6b" /><path d="M1 12l14-5 14 6-14 6z" fill="#bdbdbd" /><ellipse cx="16" cy="12.500" rx="6" ry="3" fill="#e9e9e9" /></g>
  ) },
  { label: "Media player", open: true, icon: (
    <g><path d="M8 3l18 2v22l-3 2-15-1z" fill="#5f93ae" /><path d="M3 3l20 2v24l-20-2z" fill="#9dc9e0" /><circle cx="13" cy="16" r="8.500" fill="#f47b20" /><path d="M10 11l8 5-8 5z" fill="#fff" /></g>
  ) },
  { label: "Edge", icon: (
    <g><circle cx="15" cy="15" r="15" fill="#1a78d0" /><path d="M1 12C4-3 26-4 30 12c0 8-10 8-12 5 4-6-5-11-17-5z" fill="#35c5b5" /><path d="M20 1c6 2 10 7 10 12 0 6-6 8-10 6 3-5 3-11 0-18z" fill="#5ad85e" /><path d="M11 14c-2 8 5 13 15 11-6 8-19 4-19-5 0-3 2-6 4-6z" fill="#0c4f9e" /></g>
  ) },
  { label: "Lock tool", icon: (
    <g><path d="M15 15V8a6 6 0 0 1 11-2v5" stroke="#ddd" strokeWidth="2.500" fill="none" /><rect x="3" y="13" width="17" height="16" fill="#c79f5a" /><circle cx="11.500" cy="21" r="4" fill="none" stroke="#2d2618" strokeWidth="3" strokeDasharray="2.200 1" /><circle cx="11.500" cy="21" r="3.500" fill="none" stroke="#2d2618" strokeWidth="2" /></g>
  ) },
  { label: "Exness", open: true, icon: <Exness /> },
  { label: "Monitor", icon: (
    <g><rect y="3" width="30" height="24" fill="#e4eef6" /><path d="M2 20l4-4 3-9 3 13 4-3 3 4 2-13 3 9 4-2v10H2z" fill="#8fd0f2" stroke="#3a9ad6" /></g>
  ) },
  { label: "Calculator", open: true, icon: (
    <g><rect x="3" width="24" height="30" rx="1" fill="#5b6670" /><rect x="6" y="3" width="18" height="5" fill="#3fd3f7" /><g fill="#cfd6db"><path d="M6 11h5v4H6zM12.500 11h5v4h-5zM19 11h5v4h-5zM6 17h5v4H6zM12.500 17h5v4h-5zM6 23h5v4H6zM12.500 23h5v4h-5z" /></g><rect x="19" y="17" width="5" height="10" fill="#1465b4" /></g>
  ) },
  { label: "MetaTrader", icon: (
    <g><rect width="30" height="22" fill="#0b0b0b" /><rect y="22" width="30" height="8" fill="#fff" /><path d="M9 3h6q9 7 0 15H9q9-8 0-15z" fill="#e5392b" /><text x="15" y="28" textAnchor="middle" fontSize="4" fontWeight="700" fontFamily="Open Sans">MetaTrader 5</text></g>
  ) },
  { label: "Chrome", open: true, icon: (
    <g><circle cx="15" cy="15" r="14" fill="#f9c616" /><path d="M15 15L3 8a14 14 0 0 1 24.500 0z" fill="#e33b2e" /><path d="M15 15L2.800 8A14 14 0 0 0 14 29z" fill="#1fa04c" /><circle cx="15" cy="15" r="6.800" fill="#fff" /><circle cx="15" cy="15" r="5.300" fill="#2f7de1" /></g>
  ) },
  { label: "Settings", open: true, icon: (
    <g><path d="M12 1h6l1 4 3 1.500 4-1 3 5-3 3v3l3 3-3 5-4-1-3 1.500-1 4h-6l-1-4L8 23.500l-4 1-3-5 3-3v-3l-3-3 3-5 4 1L11 5z" fill="#7d8790" /><circle cx="15" cy="15" r="6.500" fill="#fff" /><circle cx="15" cy="15" r="5" fill="#1766b8" /></g>
  ) },
  { label: "Exness terminal", active: true, icon: <Exness /> },
];

function Taskbar() {
  return (
    <div className="flex h-[60px] shrink-0 items-stretch bg-[linear-gradient(90deg,#12143c_0%,#2c1a52_24%,#42104a_38%,#3a1e25_45%,#3c2018_52%,#6b0a1a_61%,#6e0907_72%,#52100a_84%,#40130f_100%)] text-white">
      <div className="flex flex-1 items-stretch pl-[466px]">
        {apps.map((a) => (
          <button key={a.label} aria-label={a.label} className="flex w-[55px] flex-col items-center">
            <span className={`mt-[6px] flex h-[48px] w-[48px] items-center justify-center rounded-sm ${a.active ? "bg-white/10" : ""}`}>
              <svg width="30" height="30" viewBox="0 0 30 30">{a.icon}</svg>
            </span>
            {a.active && <span className="-mt-[4px] h-[4px] w-[18px] rounded-full bg-[#dca0e8]" />}
            {a.open && <span className="-mt-[4px] h-[4px] w-[8px] rounded-full bg-[#b59aa0]" />}
          </button>
        ))}
      </div>
      <div className="flex items-center pr-[30px]">
        <button aria-label="Hidden icons" className="flex w-[42px] justify-center"><Ico size={16} box="0 0 16 16"><path d="M1 12l7-8 7 8" stroke="#fff" /></Ico></button>
        <button aria-label="Wi-Fi" className="flex w-[40px] justify-center">
          <Ico size={17} box="0 0 17 17"><path d="M1 14A14 14 0 0 1 15 1M4.500 15A11 11 0 0 1 15 5M8 15.500A7.500 7.500 0 0 1 15 9" stroke="#cfc0c0" /><circle cx="14" cy="14.500" r="2" fill="#fff" /></Ico>
        </button>
        <button aria-label="Battery" className="flex w-[38px] justify-center">
          <Ico size={20} h={16} box="0 0 20 16"><path d="M5 4.500h13v9H3v-5M19 7v4M1 1v3h4V1M3 4v5" stroke="#fff" /><path d="M6 6.500h10.500v5.500H5z" fill="#fff" /></Ico>
        </button>
        <button aria-label="Volume" className="flex w-[40px] justify-center">
          <Ico size={20} h={18} box="0 0 20 18"><path d="M1 6h3l4-4v14l-4-4H1zM10.500 6.500q2 2.500 0 5" stroke="#fff" /><path d="M13.500 4q3.500 5 0 10M16.500 2q4.500 7 0 14" stroke="#a98a8a" /></Ico>
        </button>
        <button className="w-[78px] pr-px text-right leading-[21px]">5:52 AM<br />7/19/2022</button>
        <button aria-label="Notifications" className="ml-[22px] flex w-[22px] justify-center">
          <Ico size={20} box="0 0 20 20"><path d="M1 1h18v14h-6l-3 4-3-4H1z" stroke="#fff" /></Ico>
        </button>
      </div>
    </div>
  );
}

export default function App() {
  return (
    <div className="flex h-screen flex-col overflow-hidden bg-[#f0f0f0] font-['Open_Sans','Noto_Sans',sans-serif] text-[14px] leading-[20px] text-black">
      <TitleBar />
      <MenuBar />
      <Toolbar />
      <div className="flex min-h-0 flex-1">
        <aside className="flex w-[332px] shrink-0 flex-col border-r border-[#c8c8c8]">
          <MarketWatch />
          <Navigator />
        </aside>
        <div className="flex min-w-0 flex-1 flex-col pr-[2px]">
          <Chart />
          <ChartTabs />
        </div>
      </div>
      <Toolbox />
      <StatusBar />
      <Taskbar />
    </div>
  );
}
